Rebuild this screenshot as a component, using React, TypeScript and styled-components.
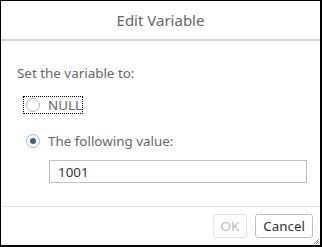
import React from "react";
import styled, { createGlobalStyle } from "styled-components";

const GlobalStyle = createGlobalStyle`
  html, body {
    margin: 0;
    padding: 0;
    background: #ffffff;
  }
  body {
    font-family: "Noto Sans", "Liberation Sans", sans-serif;
  }
`;

const Dialog = styled.div`
  position: relative;
  width: 322px;
  height: 247px;
  box-sizing: border-box;
  border: 1px solid #000;
  border-right-width: 2px;
  border-bottom-width: 2px;
  background: #fff;
  display: flex;
  flex-direction: column;
`;

const Header = styled.div`
  height: 38px;
  flex-shrink: 0;
  border-bottom: 2px solid #d9d9d9;
  display: flex;
  align-items: center;
  justify-content: center;
  font-size: 15px;
  color: #666;
`;

const Content = styled.div`
  flex: 1;
  padding: 22px 14px 0 16px;
  display: flex;
  flex-direction: column;
`;

const Label = styled.div`
  font-size: 13.4px;
  color: #666;
  line-height: 20px;
`;

const RadioRow = styled.label<{ $focused?: boolean; $gap: number }>`
  display: flex;
  align-items: center;
  gap: 8px;
  align-self: flex-start;
  height: 18px;
  box-sizing: border-box;
  padding: 0 1px 0 3px;
  margin-left: 6px;
  margin-top: ${(p) => p.$gap}px;
  outline: ${(p) => (p.$focused ? "1px dotted #000" : "none")};
  outline-offset: -1px;
  font-size: 13.4px;
  color: #666;
  line-height: 18px;
`;

const Radio = styled.span<{ $checked?: boolean }>`
  position: relative;
  width: 14px;
  height: 14px;
  box-sizing: border-box;
  border-radius: 50%;
  border: 1px solid #b5b5b5;
  background: #fff;

  &::after {
    content: "";
    display: ${(p) => (p.$checked ? "block" : "none")};
    position: absolute;
    left: 3px;
    top: 3px;
    width: 6px;
    height: 6px;
    border-radius: 50%;
    background: #3e5f85;
  }
`;

const ValueInput = styled.input`
  margin: 10px 0 0 32px;
  width: 258px;
  height: 23px;
  box-sizing: border-box;
  border: 1px solid #bfbfbf;
  padding: 0 8px;
  font-family: "Noto Sans", "Liberation Sans", sans-serif;
  font-size: 13.4px;
  color: #333;
  outline: none;
`;

const Footer = styled.div`
  height: 39px;
  flex-shrink: 0;
  border-top: 1px solid #e5e5e5;
  display: flex;
  justify-content: flex-end;
  align-items: flex-start;
  gap: 8px;
  padding: 7px 7px 0 0;
  box-sizing: border-box;
`;

const Button = styled.button<{ $disabled?: boolean }>`
  height: 24px;
  padding: 0 7px;
  border-radius: 3px;
  border: 1px solid ${(p) => (p.$disabled ? "#e3e3e3" : "#bfbfbf")};
  background: #fff;
  font-family: "Noto Sans", "Liberation Sans", sans-serif;
  font-size: 13.4px;
  color: ${(p) => (p.$disabled ? "#bdbdbd" : "#333")};
`;

const Grip = styled.svg`
  position: absolute;
  right: 0;
  bottom: 0;
`;

export default function App() {
  return (
    <>
      <GlobalStyle />
      <Dialog>
        <Header>Edit Variable</Header>
        <Content>
          <Label>Set the variable to:</Label>
          <RadioRow $focused $gap={13}>
            <Radio />
            NULL
          </RadioRow>
          <RadioRow $gap={18}>
            <Radio $checked />
            The following value:
          </RadioRow>
          <ValueInput defaultValue="1001" />
        </Content>
        <Footer>
          <Button $disabled>OK</Button>
          <Button>Cancel</Button>
        </Footer>
        <Grip width="7" height="7" viewBox="0 0 7 7">
          <path d="M6 1L1 6M6 3L3 6M6 5L5 6" stroke="#888" strokeWidth="1" />
        </Grip>
      </Dialog>
    </>
  );
}
